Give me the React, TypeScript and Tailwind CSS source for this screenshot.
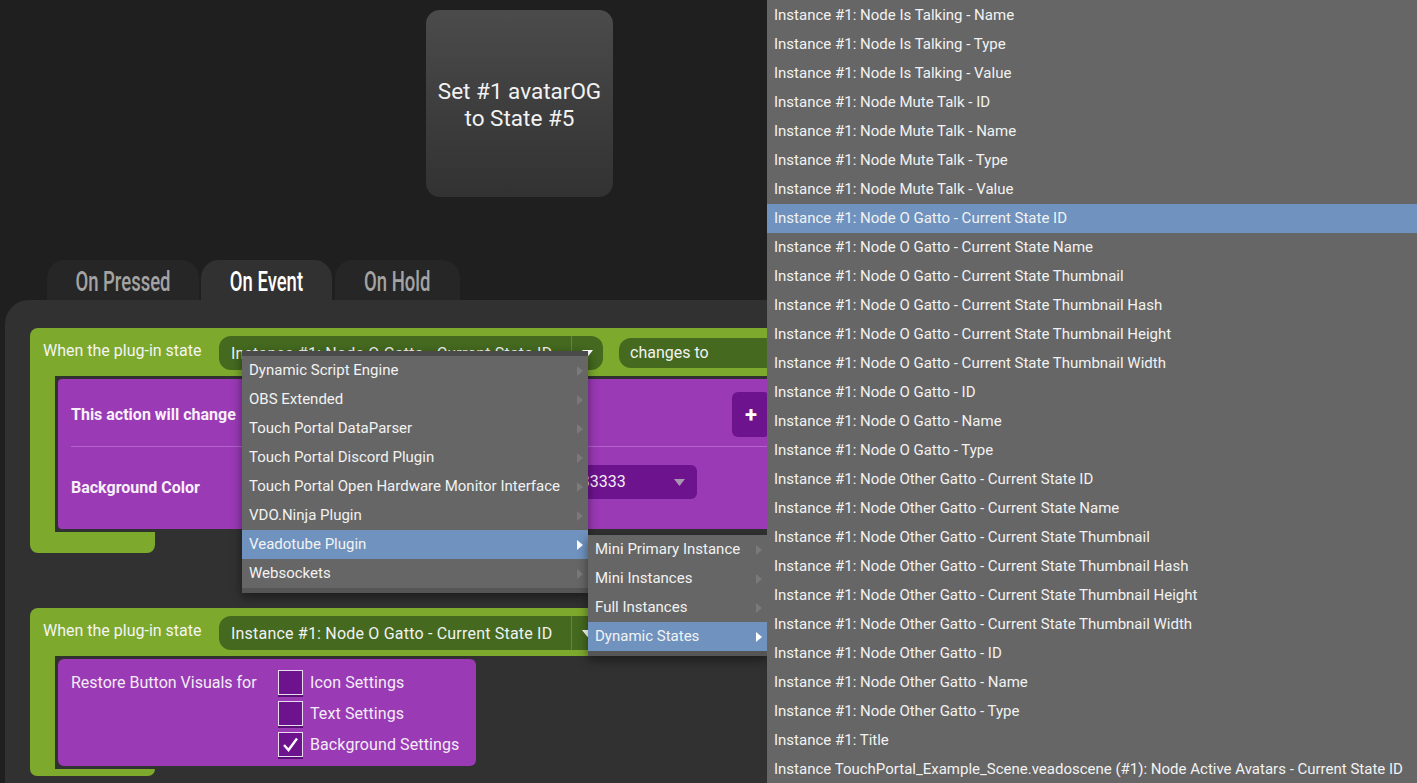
import React from "react";

const pluginMenu = [
  "Dynamic Script Engine",
  "OBS Extended",
  "Touch Portal DataParser",
  "Touch Portal Discord Plugin",
  "Touch Portal Open Hardware Monitor Interface",
  "VDO.Ninja Plugin",
  "Veadotube Plugin",
  "Websockets",
];

const subMenu = ["Mini Primary Instance", "Mini Instances", "Full Instances", "Dynamic States"];

const stateList = [
  "Instance #1: Node Is Talking - Name",
  "Instance #1: Node Is Talking - Type",
  "Instance #1: Node Is Talking - Value",
  "Instance #1: Node Mute Talk - ID",
  "Instance #1: Node Mute Talk - Name",
  "Instance #1: Node Mute Talk - Type",
  "Instance #1: Node Mute Talk - Value",
  "Instance #1: Node O Gatto - Current State ID",
  "Instance #1: Node O Gatto - Current State Name",
  "Instance #1: Node O Gatto - Current State Thumbnail",
  "Instance #1: Node O Gatto - Current State Thumbnail Hash",
  "Instance #1: Node O Gatto - Current State Thumbnail Height",
  "Instance #1: Node O Gatto - Current State Thumbnail Width",
  "Instance #1: Node O Gatto - ID",
  "Instance #1: Node O Gatto - Name",
  "Instance #1: Node O Gatto - Type",
  "Instance #1: Node Other Gatto - Current State ID",
  "Instance #1: Node Other Gatto - Current State Name",
  "Instance #1: Node Other Gatto - Current State Thumbnail",
  "Instance #1: Node Other Gatto - Current State Thumbnail Hash",
  "Instance #1: Node Other Gatto - Current State Thumbnail Height",
  "Instance #1: Node Other Gatto - Current State Thumbnail Width",
  "Instance #1: Node Other Gatto - ID",
  "Instance #1: Node Other Gatto - Name",
  "Instance #1: Node Other Gatto - Type",
  "Instance #1: Title",
  "Instance TouchPortal_Example_Scene.veadoscene (#1): Node Active Avatars - Current State ID",
];

function ArrowRight({ white }: { white?: boolean }) {
  return (
    <svg width="6" height="10" viewBox="0 0 6 10">
      <polygon points="0,0 6,5 0,10" fill={white ? "#ffffff" : "#7a7a7a"} />
    </svg>
  );
}

function ArrowDown({ color = "#ffffff" }: { color?: string }) {
  return (
    <svg width="11" height="7" viewBox="0 0 11 7">
      <polygon points="0,0 11,0 5.5,7" fill={color} />
    </svg>
  );
}

function StateSelect({ text }: { text: string }) {
  return (
    <div className="flex h-[34px] w-[384px] items-center rounded-[12px] bg-[#44691f] text-[16px] tracking-[0.2px] text-[#f2f2f2]">
      <div className="w-[352px] truncate pl-[12px] pt-[2px]">{text}</div>
      <div className="flex h-full w-[32px] items-center justify-center border-l border-[#5f8a31]">
        <ArrowDown />
      </div>
    </div>
  );
}

function Checkbox({ checked, label }: { checked?: boolean; label: string }) {
  return (
    <div className="flex items-center gap-[7px]">
      <div className="flex h-[25px] w-[25px] items-center justify-center border border-[#e8dcef] bg-[#6d138e] shadow-[0_2px_0_#5a0f75]">
        {checked && (
          <svg width="17" height="15" viewBox="0 0 17 15">
            <polyline points="2,8 6.5,13 15,1.5" fill="none" stroke="#ffffff" strokeWidth="2.4" />
          </svg>
        )}
      </div>
      <span className="text-[16px] tracking-[0.1px] text-[#f4ecf7]">{label}</span>
    </div>
  );
}

export default function App() {
  return (
    <div className="relative h-[783px] w-[1417px] overflow-hidden bg-[#1f1f1f] font-['Roboto',sans-serif]">
      {/* button preview */}
      <div className="pl-[426px] pt-[10px]">
        <div className="flex h-[187px] w-[187px] items-center justify-center rounded-[14px] bg-linear-to-b from-[#4b4b4b] to-[#323232] pt-[3px] text-center text-[22.5px] leading-[27px] text-[#f2f2f2]">
          Set #1 avatarOG
          <br />
          to State #5
        </div>
      </div>

      {/* tabs */}
      <div className="mt-[63px] flex pl-[47px]">
        <div className="flex h-[40px] w-[152px] items-center justify-center rounded-t-[18px] bg-[#262626] pt-[3px]">
          <span className="inline-block scale-x-[0.66] text-[28px] font-medium text-[#a3a3a3]">On Pressed</span>
        </div>
        <div className="ml-[2px] flex h-[40px] w-[131px] items-center justify-center rounded-t-[18px] bg-[#313131] pt-[3px]">
          <span className="inline-block scale-x-[0.66] text-[28px] font-medium text-white">On Event</span>
        </div>
        <div className="ml-[3px] flex h-[40px] w-[125px] items-center justify-center rounded-t-[18px] bg-[#262626] pt-[3px]">
          <span className="inline-block scale-x-[0.66] text-[28px] font-medium text-[#a3a3a3]">On Hold</span>
        </div>
      </div>

      {/* action panel */}
      <div className="ml-[5px] h-[483px] overflow-hidden rounded-tl-[24px] bg-[#313131] pl-[25px] pt-[28px]">
        {/* block 1 */}
        <div className="w-[1000px]">
          <div className="flex h-[48px] items-start rounded-t-[8px] bg-[#7da92d] pl-[13px]">
            <span className="mt-[11px] w-[161px] text-[16px] text-[#f4f4f4]">When the plug-in state</span>
            <div className="ml-[15px] mt-[8px]">
              <StateSelect text="Instance #1: Node O Gatto - Current State ID" />
            </div>
            <div className="ml-[16px] mt-[10px] flex h-[30px] w-[300px] items-center rounded-[12px] bg-[#44691f] pl-[11px] text-[16px] text-[#f2f2f2]">
              changes to
            </div>
          </div>
          <div className="flex">
            <div className="w-[25px] bg-[#7da92d]" />
            <div className="p-[3px]">
              <div className="h-[150px] w-[725px] rounded-[4px] bg-[#9a3ab5]">
                <div className="flex h-[67px] items-center pl-[13px] pr-[13px] pt-[4px]">
                  <span className="text-[16px] font-bold text-[#f7f0fa]">This action will change</span>
                  <div className="ml-auto flex h-[45px] w-[38px] items-center justify-center rounded-[6px] bg-[#6d138e] text-[22px] font-bold text-white">
                    +
                  </div>
                </div>
                <div className="ml-[13px] h-px bg-[#b462cd]" />
                <div className="flex items-start pl-[13px] pt-[18px]">
                  <span className="mt-[11px] w-[479px] text-[16px] font-bold text-[#f7f0fa]">Background Color</span>
                  <div className="flex h-[34px] w-[147px] items-center justify-between rounded-[6px] bg-[#6d138e] pl-[12px] pr-[12px] text-[16px] text-[#f4ecf7]">
                    <span>#333333</span>
                    <ArrowDown color="#a996b0" />
                  </div>
                </div>
              </div>
            </div>
          </div>
          <div className="h-[21px] w-[125px] rounded-b-[8px] bg-[#7da92d]" />
        </div>

        {/* block 2 */}
        <div className="mt-[55px] w-[1000px]">
          <div className="flex h-[48px] items-start rounded-t-[8px] bg-[#7da92d] pl-[13px]">
            <span className="mt-[11px] w-[161px] text-[16px] text-[#f4f4f4]">When the plug-in state</span>
            <div className="ml-[15px] mt-[8px]">
              <StateSelect text="Instance #1: Node O Gatto - Current State ID" />
            </div>
          </div>
          <div className="flex">
            <div className="w-[25px] bg-[#7da92d]" />
            <div className="p-[3px]">
              <div className="flex h-[107px] w-[418px] items-start rounded-[6px] bg-[#9a3ab5] pl-[13px] pt-[11px]">
                <span className="mt-[1px] w-[207px] text-[16px] text-[#f4ecf7]">Restore Button Visuals for</span>
                <div className="flex flex-col gap-[6px]">
                  <Checkbox label="Icon Settings" />
                  <Checkbox label="Text Settings" />
                  <Checkbox label="Background Settings" checked />
                </div>
              </div>
            </div>
          </div>
          <div className="h-[7px] w-[125px] rounded-b-[8px] bg-[#7da92d]" />
        </div>
      </div>

      {/* plugin dropdown menu */}
      <div className="absolute left-[242px] top-[351px] w-[346px] border-b-[5px] border-t-[5px] border-b-[#555555] border-t-[#4a4a4a] bg-[#666666] shadow-[0_4px_10px_rgba(0,0,0,0.45)]">
        {pluginMenu.map((item) => {
          const active = item === "Veadotube Plugin";
          return (
            <div
              key={item}
              className={`flex h-[29px] items-center justify-between pl-[7px] pr-[5px] text-[15px] text-[#f2f2f2] ${
                active ? "bg-[#6f92bf]" : ""
              }`}
            >
              <span>{item}</span>
              <ArrowRight white={active} />
            </div>
          );
        })}
      </div>

      {/* sub menu */}
      <div className="absolute left-[588px] top-[535px] w-[179px] border-b-[5px] border-b-[#555555] bg-[#666666] shadow-[0_4px_10px_rgba(0,0,0,0.45)]">
        {subMenu.map((item) => {
          const active = item === "Dynamic States";
          return (
            <div
              key={item}
              className={`flex h-[29px] items-center justify-between pl-[7px] pr-[5px] text-[15px] text-[#f2f2f2] ${
                active ? "bg-[#6f92bf]" : ""
              }`}
            >
              <span>{item}</span>
              <ArrowRight white={active} />
            </div>
          );
        })}
      </div>

      {/* state list */}
      <div className="absolute left-[767px] top-0 h-[783px] w-[650px] bg-[#666666] pt-[1px]">
        {stateList.map((item) => (
          <div
            key={item}
            className={`flex h-[29px] items-center pl-[7px] text-[15px] text-[#f2f2f2] ${
              item === "Instance #1: Node O Gatto - Current State ID" ? "bg-[#6f92bf]" : ""
            }`}
          >
            {item}
          </div>
        ))}
      </div>
    </div>
  );
}
